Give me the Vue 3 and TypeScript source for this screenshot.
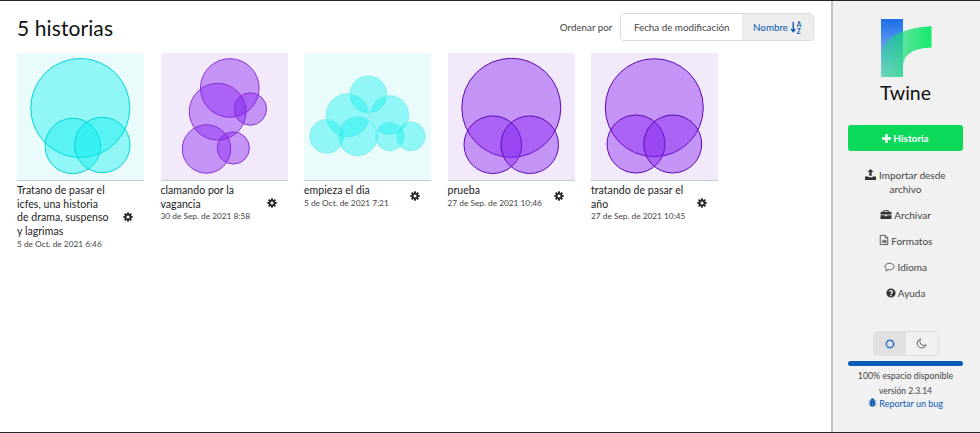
<script setup lang="ts">
interface Bubble {
  x: number
  y: number
  r: number
}

interface Story {
  name: string[]
  date: string
  tone: 'teal' | 'violet' | 'teal-soft' | 'violet-deep'
  bubbles: Bubble[]
}

const stories: Story[] = [
  {
    name: ['Tratano de pasar el', 'icfes, una historia', 'de drama, suspenso', 'y lagrimas'],
    date: '5 de Oct. de 2021 6:46',
    tone: 'teal',
    bubbles: [
      { x: 63.3, y: 55, r: 49.5 },
      { x: 55.8, y: 93, r: 27.7 },
      { x: 85.3, y: 92, r: 27.7 },
    ],
  },
  {
    name: ['clamando por la', 'vagancia'],
    date: '30 de Sep. de 2021 8:58',
    tone: 'violet',
    bubbles: [
      { x: 68.8, y: 35, r: 29.3 },
      { x: 56.7, y: 58.7, r: 28.4 },
      { x: 89.3, y: 56, r: 16.2 },
      { x: 45.5, y: 96, r: 24.2 },
      { x: 72.3, y: 95, r: 16.1 },
    ],
  },
  {
    name: ['empieza el dia'],
    date: '5 de Oct. de 2021 7:21',
    tone: 'teal-soft',
    bubbles: [
      { x: 64.3, y: 41.3, r: 18.3 },
      { x: 43.7, y: 62.3, r: 21.5 },
      { x: 85.3, y: 62, r: 19.2 },
      { x: 22.7, y: 83.3, r: 16.8 },
      { x: 53.7, y: 83, r: 19.6 },
      { x: 85.7, y: 83.3, r: 14.3 },
      { x: 106.7, y: 83.3, r: 14.3 },
    ],
  },
  {
    name: ['prueba'],
    date: '27 de Sep. de 2021 10:46',
    tone: 'violet-deep',
    bubbles: [
      { x: 63.3, y: 54.8, r: 49.5 },
      { x: 44.8, y: 91.7, r: 28.8 },
      { x: 81.7, y: 91.7, r: 28.8 },
    ],
  },
  {
    name: ['tratando de pasar el', 'año'],
    date: '27 de Sep. de 2021 10:45',
    tone: 'violet-deep',
    bubbles: [
      { x: 63.3, y: 54.7, r: 49 },
      { x: 45, y: 91, r: 29 },
      { x: 81.7, y: 91, r: 29 },
    ],
  },
]

// eight toothed cog, centred on 8,8
function gearPath(): string {
  const teeth = 8
  const pts: string[] = []
  for (let i = 0; i < teeth; i++) {
    const a = (i / teeth) * Math.PI * 2
    const spread = [-0.3, -0.17, 0.17, 0.3]
    const radii = [5.6, 7.8, 7.8, 5.6]
    spread.forEach((s, k) => {
      const x = 8 + Math.cos(a + s) * radii[k]
      const y = 8 + Math.sin(a + s) * radii[k]
      pts.push(`${x.toFixed(2)} ${y.toFixed(2)}`)
    })
  }
  return `M${pts.join('L')}Z M8 5.6A2.4 2.4 0 1 0 8 10.4A2.4 2.4 0 1 0 8 5.6Z`
}

const gear = gearPath()
</script>

<template>
  <div class="page">
    <main class="library">
      <header class="topbar">
        <h1>5 historias</h1>
        <div class="sort">
          <span class="sort-label">Ordenar por</span>
          <div class="sort-group">
            <button class="sort-btn">Fecha de modificación</button>
            <button class="sort-btn active">
              Nombre
              <svg class="az" viewBox="0 0 14 14" width="13" height="13">
                <path d="M3.5 1v10M1.3 8.600l2.200 2.800 2.200-2.800" fill="none" stroke="currentColor" stroke-width="1.5" />
                <text x="7.400" y="6" class="az-text">A</text>
                <text x="7.400" y="13.500" class="az-text">Z</text>
              </svg>
            </button>
          </div>
        </div>
      </header>

      <section class="cards">
        <article v-for="story in stories" :key="story.date" class="card">
          <svg class="thumb" :class="story.tone" viewBox="0 0 127 127" width="127" height="127">
            <circle v-for="(b, i) in story.bubbles" :key="i" :cx="b.x" :cy="b.y" :r="b.r" />
          </svg>
          <div class="details">
            <div class="text">
              <div class="name">
                <div v-for="line in story.name" :key="line">{{ line }}</div>
              </div>
              <div class="date">{{ story.date }}</div>
            </div>
            <svg class="gear" viewBox="0 0 16 16" width="10" height="10">
              <path :d="gear" fill="#2a2a2a" fill-rule="evenodd" />
            </svg>
          </div>
        </article>
      </section>
    </main>

    <aside class="sidebar">
      <div class="brand">
        <svg viewBox="0 0 52 60" width="52" height="60">
          <defs>
            <linearGradient id="blue" x1="0" y1="0" x2="0" y2="1">
              <stop offset="0" stop-color="#1a6ee8" />
              <stop offset="1" stop-color="#b9d6f8" />
            </linearGradient>
            <linearGradient id="green" x1="0" y1="0" x2="1" y2="0">
              <stop offset="0" stop-color="#17d67a" stop-opacity="0.45" />
              <stop offset="1" stop-color="#14ea6c" />
            </linearGradient>
          </defs>
          <rect x="1" y="1" width="22" height="58" fill="url(#blue)" />
          <path d="M51.500 8C30 10 1 15 1 40V59H23V49C23 35 36 30 51.500 29.500Z" fill="url(#green)" />
        </svg>
        <div class="brand-name">Twine</div>
      </div>

      <button class="new-story">
        <svg viewBox="0 0 10 10" width="9" height="9"><path d="M3.700 0h2.600v3.700H10v2.600H6.300V10H3.700V6.300H0V3.700h3.700Z" fill="#fff" /></svg>
        Historia
      </button>

      <nav class="actions">
        <a class="action">
          <svg viewBox="0 0 12 12" width="11" height="11"><path d="M6 0 9.200 3.400H7.300V7.300H4.700V3.400H2.800ZM0 8.200h3.700v.8h4.600v-.8H12V12H0Z" fill="#333" /></svg>
          Importar desde<br />archivo
        </a>
        <a class="action">
          <svg viewBox="0 0 12 12" width="12" height="11"><path d="M4 1h4l1 1v1h2.200l.8.800V6H0V3.800L.8 3H3V2ZM4 2v1h4V2ZM0 6.800h4.800v1h2.400v-1H12v4.200H0Z" fill="#333" fill-rule="evenodd" /></svg>
          Archivar
        </a>
        <a class="action">
          <svg viewBox="0 0 12 12" width="10" height="12"><path d="M1.500.5h6l3 3v8h-9ZM7.500.5v3h3M3.800 8a1 1 0 1 0 2 0a1 1 0 1 0-2 0M5.800 5.500V8M7 6.500h1.500V9.500H7Z" fill="none" stroke="#333" stroke-width=".9" /></svg>
          Formatos
        </a>
        <a class="action">
          <svg viewBox="0 0 12 12" width="11" height="10"><path d="M6 1.500c3 0 5.400 1.700 5.400 4S9 9.500 6 9.500c-.6 0-1.200 0-1.700-.2L1.800 10.800l.6-2.300C1.200 7.700.6 6.700.6 5.500c0-2.300 2.400-4 5.400-4Z" fill="none" stroke="#333" stroke-width=".9" /></svg>
          Idioma
        </a>
        <a class="action">
          <svg viewBox="0 0 12 12" width="10" height="10"><path d="M6 .5a5.500 5.500 0 1 0 0 11a5.500 5.500 0 1 0 0-11ZM5.200 9.800V8.200h1.600v1.600ZM5.200 7.400c0-1.600 1.700-1.600 1.700-2.700 0-.5-.4-.8-.9-.8s-1 .3-1.300.8L3.500 3.700C4 2.900 4.900 2.400 6 2.400c1.500 0 2.600.9 2.600 2.200 0 1.800-1.800 1.800-1.800 2.800Z" fill="#333" fill-rule="evenodd" /></svg>
          Ayuda
        </a>
      </nav>

      <footer class="status">
        <div class="theme">
          <span class="theme-btn on">
            <svg viewBox="0 0 12 12" width="12" height="12"><circle cx="6" cy="6" r="3.700" fill="none" stroke="#0a5bb5" stroke-width="1.500" stroke-dasharray="1.800 .5" /></svg>
          </span>
          <span class="theme-btn">
            <svg viewBox="0 0 12 12" width="11" height="11"><path d="M5 1a5 5 0 1 0 6 6.500A4.500 4.500 0 0 1 5 1Z" fill="none" stroke="#555" stroke-width="1" /></svg>
          </span>
        </div>
        <div class="meter"><div class="meter-fill" :style="{ width: '100%' }"></div></div>
        <div class="space">100% espacio disponible</div>
        <div class="version">versión 2.3.14</div>
        <a class="bug">
          <svg viewBox="0 0 12 12" width="9" height="9"><path d="M4 2.500a2 2 0 0 1 4 0ZM3 3.300h6v5.200c0 1.500-1.200 2.700-2.600 2.700V5.500h-.8v5.700C4.200 11.200 3 10 3 8.500ZM0.800 3.500l2 1.500M11.200 3.500l-2 1.500M.3 7.200h2.500M11.700 7.200H9.200M1 11l2-1.800M11 11 9 9.200" fill="#0a5bb5" stroke="#0a5bb5" stroke-width=".7" /></svg>
          Reportar un bug
        </a>
      </footer>
    </aside>
  </div>
</template>

<style scoped>
.page {
  box-sizing: border-box;
  width: 980px;
  height: 433px;
  display: flex;
  border-top: 1px solid #23262b;
  border-bottom: 1px solid #23262b;
  background: #fff;
  font-family: "Lato", "Noto Sans", sans-serif;
  color: #333;
  overflow: hidden;
}

.library {
  flex: 1;
  min-width: 0;
  padding: 12px 17px 0;
}

.topbar {
  display: flex;
  justify-content: space-between;
  align-items: center;
  height: 28px;
  margin-bottom: 12px;
}

h1 {
  margin: 0;
  font-size: 21px;
  font-weight: 400;
  letter-spacing: 0.1px;
  color: #111;
}

.sort {
  display: flex;
  align-items: center;
  gap: 8px;
}

.sort-label {
  font-size: 9.800px;
  color: #444;
}

.sort-group {
  display: flex;
  height: 28px;
  box-sizing: border-box;
  border: 1px solid #dcdcdc;
  border-radius: 4px;
  overflow: hidden;
}

.sort-btn {
  border: 0;
  background: #fff;
  font: inherit;
  font-size: 9.800px;
  color: #444;
  padding: 0 12.500px;
  display: flex;
  align-items: center;
  gap: 2px;
}

.sort-btn.active {
  background: #ededed;
  color: #0a5bb5;
  padding: 0 10px 0 11px;
}

.az-text {
  font-size: 7px;
  font-weight: 700;
  fill: currentColor;
}

.cards {
  display: flex;
  gap: 16.500px;
}

.card {
  width: 127px;
}

.thumb {
  display: block;
  border-bottom: 1px solid #c9c9d0;
  box-sizing: content-box;
}

.thumb circle {
  stroke-width: 1;
}

.teal {
  background: #eafbfb;
}

.teal circle {
  fill: rgba(0, 240, 240, 0.38);
  stroke: #00d4d8;
}

.teal-soft {
  background: #eafbfb;
}

.teal-soft circle {
  fill: rgba(0, 240, 240, 0.38);
  stroke: #7deff0;
}

.violet {
  background: #f2eafa;
}

.violet circle {
  fill: rgba(133, 31, 240, 0.42);
  stroke: #8a2fd8;
}

.violet-deep {
  background: #f2eafa;
}

.violet-deep circle {
  fill: rgba(133, 31, 240, 0.42);
  stroke: #5c08b8;
}

.details {
  display: flex;
  align-items: center;
  padding-top: 3px;
}

.text {
  width: 105px;
}

.name {
  font-size: 10.500px;
  line-height: 13.700px;
  letter-spacing: 0.05px;
  color: #222;
}

.date {
  font-size: 8.300px;
  line-height: 11px;
  color: #444;
}

.gear {
  margin-left: 1px;
  flex: none;
}

.sidebar {
  box-sizing: border-box;
  width: 149px;
  flex: none;
  display: flex;
  flex-direction: column;
  align-items: center;
  background: #f1f1f1;
  border-left: 2px solid #c2c2c2;
  padding: 17px 17px 0 15px;
  font-size: 10px;
  color: #444;
}

.brand {
  text-align: center;
}

.brand svg {
  display: block;
  margin: 0 auto;
}

.brand-name {
  font-size: 19.500px;
  color: #111;
  margin-top: 3px;
}

.new-story {
  margin-top: 21px;
  width: 100%;
  height: 26px;
  border: 0;
  border-radius: 3px;
  background: #0ad95a;
  color: #fff;
  font: inherit;
  font-size: 10px;
  font-weight: 700;
  display: flex;
  align-items: center;
  justify-content: center;
  gap: 2px;
  flex: none;
}

.actions {
  margin-top: 17px;
  display: flex;
  flex-direction: column;
  align-items: center;
  gap: 12px;
}

.action {
  text-align: center;
  line-height: 14px;
}

.action svg {
  vertical-align: -1px;
}

.status {
  margin-top: auto;
  width: 100%;
  padding-bottom: 23px;
  display: flex;
  flex-direction: column;
  align-items: center;
}

.theme {
  display: flex;
  height: 25px;
  box-sizing: border-box;
  border: 1px solid #dedede;
  border-radius: 4px;
  overflow: hidden;
  margin-bottom: 5px;
}

.theme-btn {
  width: 32px;
  display: flex;
  align-items: center;
  justify-content: center;
}

.theme-btn.on {
  background: #e0e0e0;
}

.meter {
  width: 100%;
  height: 5px;
  border-radius: 3px;
  background: #ddd;
  overflow: hidden;
}

.meter-fill {
  height: 100%;
  background: #0a5bb5;
}

.space {
  font-size: 8.800px;
  line-height: 11px;
  margin-top: 4px;
}

.version {
  font-size: 8.500px;
  line-height: 11px;
  margin-top: 5px;
}

.bug {
  font-size: 9px;
  line-height: 11px;
  margin-top: 1px;
  color: #0a5bb5;
}
</style>
